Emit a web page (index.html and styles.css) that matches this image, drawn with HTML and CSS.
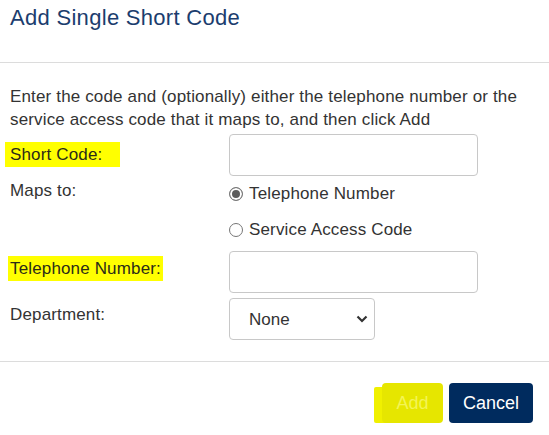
FILE: index.html
```html
<!DOCTYPE html>
<html>
<head>
<meta charset="utf-8">
<link rel="stylesheet" href="styles.css">
</head>
<body>
<div class="dialog">
  <div class="header">
    <h1 class="title">Add Single Short Code</h1>
  </div>
  <div class="content">
    <p class="intro">Enter the code and (optionally) either the telephone number or the service access code that it maps to, and then click Add</p>
    <div class="form">
      <div class="label label-sc"><span class="hl hl-sc">Short Code:</span></div>
      <div class="field"><input class="text-input" type="text"></div>

      <div class="label label-maps">Maps to:</div>
      <div class="field options">
        <label class="option"><input class="radio" type="radio" name="maps" checked><span>Telephone Number</span></label>
        <label class="option"><input class="radio" type="radio" name="maps"><span>Service Access Code</span></label>
      </div>

      <div class="label label-tel"><span class="hl hl-tel">Telephone Number:</span></div>
      <div class="field"><input class="text-input" type="text"></div>

      <div class="label label-dept">Department:</div>
      <div class="field">
        <div class="select-wrap">
          <select class="select"><option>None</option></select>
          <svg class="chev" width="12" height="8" viewBox="0 0 12 8"><path d="M1.5 1.5 L6 6 L10.5 1.5" fill="none" stroke="#333" stroke-width="2.2"/></svg>
        </div>
      </div>
    </div>
  </div>
  <div class="footer">
    <button class="btn btn-add">Add</button>
    <button class="btn btn-cancel">Cancel</button>
  </div>
</div>
</body>
</html>
```

FILE: styles.css
```css
* { box-sizing: border-box; }
html, body { margin: 0; padding: 0; background: #fff; }
body {
  font-family: "Liberation Sans", Arial, sans-serif;
  color: #333;
  font-size: 17px;
  letter-spacing: 0.15px;
  width: 549px;
  height: 435px;
  overflow: hidden;
}
.header {
  height: 63px;
  border-bottom: 1px solid #dcdcdc;
  padding: 6px 10px 0;
}
.title {
  margin: 0;
  font-weight: normal;
  font-size: 22px;
  letter-spacing: 0.3px;
  line-height: 24px;
  color: #1b3d6e;
}
.content {
  padding: 22px 10px 21px;
  border-bottom: 1px solid #dcdcdc;
}
.intro {
  margin: 0 0 3px;
  line-height: 23px;
}
.form {
  display: grid;
  grid-template-columns: 219px 248px;
  row-gap: 5px;
}
.label { line-height: 23px; }
.label-sc { padding-top: 8px; }
.label-maps { padding-top: 0; line-height: 20px; }
.label-tel { padding-top: 5px; }
.label-dept { padding-top: 5px; }
.hl {
  display: inline-block;
  background: #ffff00;
  margin-left: -5px;
  padding: 1px 18px 1px 5px;
  color: #2b2b18;
}
.hl-tel { margin-left: -2px; padding: 1px 2px 1px 2px; }
.text-input {
  display: block;
  width: 249px;
  height: 42px;
  border: 1px solid #c8c8c8;
  border-radius: 4px;
  font: inherit;
  padding: 0 10px;
  outline: none;
}
.options {
  display: flex;
  flex-direction: column;
  gap: 12px;
  padding-top: 1px;
  padding-bottom: 4px;
}
.option {
  display: flex;
  align-items: center;
  gap: 6px;
  height: 24px;
  color: #333;
}
.radio {
  appearance: none;
  -webkit-appearance: none;
  margin: 0;
  width: 14px;
  height: 14px;
  border: 1px solid #767676;
  border-radius: 50%;
  background: #fff;
}
.radio:checked {
  border-color: #7a7a7a;
  background: #5c5c5c;
  box-shadow: inset 0 0 0 2px #fff;
}
.select-wrap {
  position: relative;
  width: 146px;
  height: 42px;
}
.select {
  appearance: none;
  -webkit-appearance: none;
  width: 146px;
  height: 42px;
  border: 1px solid #c8c8c8;
  border-radius: 4px;
  background: #fff;
  font: inherit;
  color: #333;
  padding: 0 0 0 19px;
  outline: none;
}
.chev {
  position: absolute;
  right: 7px;
  top: 17px;
}
.footer {
  display: flex;
  justify-content: flex-end;
  gap: 6px;
  padding: 21px 16px 0 0;
}
.btn {
  height: 40px;
  border: none;
  border-radius: 4px;
  font-family: "Liberation Sans", Arial, sans-serif;
  font-size: 18px;
  padding: 0 12px;
}
.btn-add {
  position: relative;
  width: 61px;
  background: #e6e600;
  color: #f4f455;
  box-shadow: -10px 2px 0 -2px #f0f000;
}
.btn-cancel {
  width: 84px;
  background: #002b5e;
  color: #fff;
}
```
